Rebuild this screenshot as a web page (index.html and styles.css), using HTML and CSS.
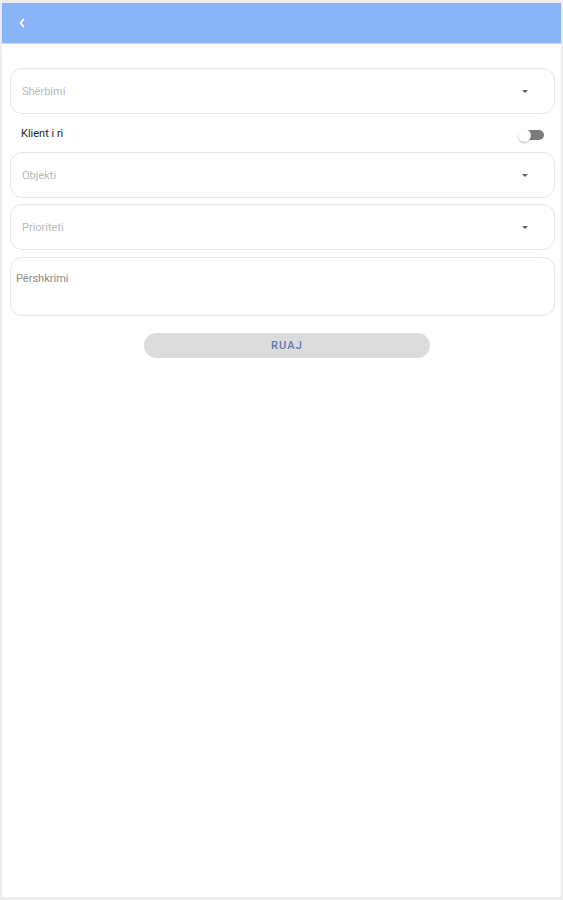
FILE: index.html
```html
<!DOCTYPE html>
<html>
<head>
	<title>Kërkesë e re</title>
	<link rel="stylesheet" href="styles.css">
</head>
<body>
	<div class="frame">
		<div class="toolbar">
			<button class="back" type="button">
				<svg width="8" height="10" viewBox="0 0 8 10"><path d="M5.5 1.5 L2.5 5 L5.5 8.5" fill="none" stroke="#ffffff" stroke-width="1.8" stroke-linecap="round" stroke-linejoin="round"/></svg>
			</button>
		</div>

		<div class="form">
			<div class="field select">
				<span class="placeholder">Shërbimi</span>
				<span class="caret"></span>
			</div>

			<div class="switch-row">
				<span class="switch-label">Klient i ri</span>
				<span class="switch"><span class="thumb"></span></span>
			</div>

			<div class="field select">
				<span class="placeholder">Objekti</span>
				<span class="caret"></span>
			</div>

			<div class="field select">
				<span class="placeholder">Prioriteti</span>
				<span class="caret"></span>
			</div>

			<div class="field textarea">
				<span class="desc">Përshkrimi</span>
			</div>

			<div class="actions">
				<button class="save" type="button">RUAJ</button>
			</div>
		</div>
	</div>
</body>
</html>
```

FILE: styles.css
```css
html, body {
	margin: 0;
	padding: 0;
	background: #ffffff;
}

body {
	font-family: Roboto, "Liberation Sans", Arial, sans-serif;
	font-size: 11px;
}

/* outer frame */
.frame {
	box-sizing: border-box;
	height: 900px;
	border: 2px solid #ececec;
	border-top-width: 3px;
	border-bottom-width: 3px;
}

/* top bar */
.toolbar {
	height: 40px;
	background-color: #8ab4f8;
	border-bottom: 1px solid #c4d8fa;
	display: flex;
	align-items: center;
	padding-left: 15px;
}

.back {
	background: none;
	border: 0;
	padding: 0;
	width: 10px;
	height: 12px;
	display: flex;
	align-items: center;
	justify-content: center;
	cursor: pointer;
}

/* form */
.form {
	padding: 24px 6px 0 8px;
	display: flex;
	flex-direction: column;
	gap: 6px;
}

.field {
	box-sizing: border-box;
	border: 1px solid #e6e6e6;
	border-radius: 12px;
	background: #ffffff;
}

.select {
	height: 46px;
	display: flex;
	align-items: center;
	justify-content: space-between;
	padding: 0 26px 0 11px;
}

.placeholder {
	color: #b8b8b8;
}

.caret {
	width: 0;
	height: 0;
	border-left: 3px solid transparent;
	border-right: 3px solid transparent;
	border-top: 3px solid #5f5f5f;
	margin-top: 1px;
}

.switch-row {
	height: 26px;
	display: flex;
	align-items: center;
	justify-content: space-between;
	padding: 0 11px 0 11px;
}

.switch-label {
	color: #1e1e1e;
}

.switch {
	position: relative;
	width: 26px;
	height: 13px;
	display: flex;
	align-items: center;
	margin-top: 4px;
}

.switch::before {
	content: "";
	display: block;
	margin-left: 6px;
	width: 20px;
	height: 10px;
	border-radius: 5px;
	background: #7a7a7a;
}

/* knob overlaps the track */
.thumb {
	position: absolute;
	left: 0;
	top: 0;
	width: 13px;
	height: 13px;
	border-radius: 50%;
	background: #ffffff;
	box-shadow: 0 1px 2px rgba(0, 0, 0, 0.3);
}

.textarea {
	height: 59px;
	padding: 14px 5px;
	margin-top: 1px;
}

.desc {
	color: #8a8a8a;
}

.actions {
	display: flex;
	justify-content: center;
	margin-top: 11px;
	padding-left: 9px;
}

.save {
	width: 286px;
	height: 25px;
	border: 0;
	border-radius: 13px;
	background: #dcdbdb;
	color: #5b78ab;
	font-family: Roboto, "Liberation Sans", Arial, sans-serif;
	font-size: 11px;
	font-weight: 500;
	letter-spacing: 1.2px;
	cursor: pointer;
}
```
